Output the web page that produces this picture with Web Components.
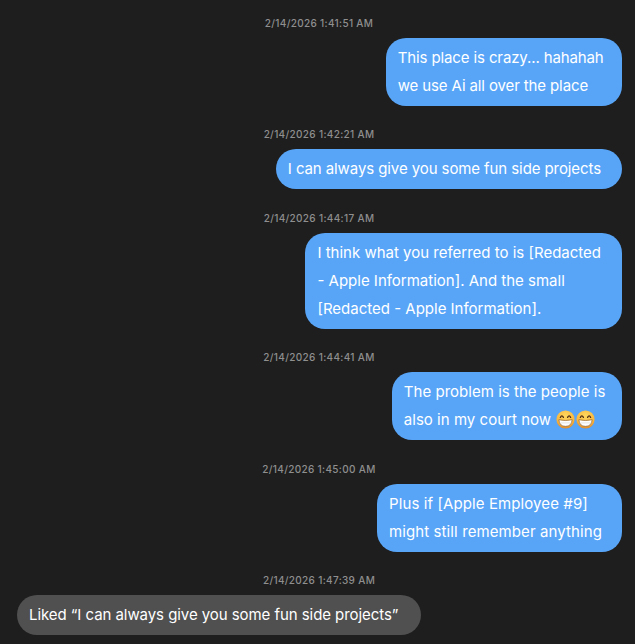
<!DOCTYPE html>
<html>
<head>
<meta charset="utf-8">
<title>Messages</title>
<style>
  html, body { margin: 0; background: #1e1e1e; }
  body { height: 644px; overflow: hidden; }
</style>
</head>
<body>
<chat-thread>
  <chat-stamp>2/14/2026 1:41:51 AM</chat-stamp>
  <chat-bubble style="--pad-end:18.4px;--track:-0.12px">This place is crazy... hahahah<br>we use Ai all over the place</chat-bubble>
  <chat-stamp>2/14/2026 1:42:21 AM</chat-stamp>
  <chat-bubble style="--pad-end:21px;--track:-0.09px">I can always give you some fun side projects</chat-bubble>
  <chat-stamp>2/14/2026 1:44:17 AM</chat-stamp>
  <chat-bubble style="--pad-end:21px">I think what you referred to is [Redacted<br>- Apple Information]. And the small<br>[Redacted - Apple Information].</chat-bubble>
  <chat-stamp>2/14/2026 1:44:41 AM</chat-stamp>
  <chat-bubble style="--pad-end:16.6px;--track:0.03px">The problem is the people is<br>also in my court now <grin-emoji></grin-emoji><grin-emoji></grin-emoji></chat-bubble>
  <chat-stamp>2/14/2026 1:45:00 AM</chat-stamp>
  <chat-bubble style="--pad-end:20px;--track:0.1px">Plus if [Apple Employee #9]<br>might still remember anything</chat-bubble>
  <chat-stamp>2/14/2026 1:47:39 AM</chat-stamp>
  <chat-bubble incoming style="--pad-end:23px;--track:-0.06px">Liked “I can always give you some fun side projects”</chat-bubble>
</chat-thread>

<script>
class ChatThread extends HTMLElement {
    constructor() {
        super()
        this.attachShadow({ mode: 'open' })
        this.shadowRoot.innerHTML = `
      <style>
        :host {
          display: flex;
          flex-direction: column;
          padding: 15px 13px 0 17px;
          font-family: Inter, "Liberation Sans", sans-serif;
        }
      </style>
      <slot></slot>
    `
    }
}

class ChatStamp extends HTMLElement {
    constructor() {
        super()
        this.attachShadow({ mode: 'open' })
        this.shadowRoot.innerHTML = `
      <style>
        :host {
          display: block;
          height: 22.6px;
          padding-right: 1px;
          line-height: 16px;
          text-align: center;
          font-size: 10px;
          font-weight: 500;
          letter-spacing: 0.33px;
          color: #8f8f8f;
          white-space: nowrap;
        }
      </style>
      <slot></slot>
    `
    }
}

class ChatBubble extends HTMLElement {
    constructor() {
        super()
        this.attachShadow({ mode: 'open' })
        this.shadowRoot.innerHTML = `
      <style>
        :host {
          display: block;
          align-self: flex-end;
          margin-bottom: 20.9px;
          padding: 6px var(--pad-end, 12px) 6px 12px;
          border-radius: 20px;
          background: #58a5f8;
          color: #fff;
          font-size: 15px;
          letter-spacing: var(--track, 0);
          line-height: 28px;
          white-space: nowrap;
        }
        :host([incoming]) {
          align-self: flex-start;
          background: #505050;
        }
      </style>
      <slot></slot>
    `
    }
}

class GrinEmoji extends HTMLElement {
    constructor() {
        super()
        this.attachShadow({ mode: 'open' })
        this.shadowRoot.innerHTML = `
      <style>
        :host {
          display: inline-block;
          width: 19px;
          height: 19px;
          margin-left: 1px;
          vertical-align: -4px;
        }
        svg { display: block; }
      </style>
      <svg width="19" height="19" viewBox="0 0 20 20">
        <defs>
          <radialGradient id="f" cx="50%" cy="30%" r="72%">
            <stop offset="0" stop-color="#ffd85e"/>
            <stop offset="0.7" stop-color="#f8b63f"/>
            <stop offset="1" stop-color="#d9822b"/>
          </radialGradient>
        </defs>
        <circle cx="10" cy="10" r="9.6" fill="url(#f)"/>
        <path d="M4.6 7.8 Q6.1 4.6 7.8 7.8" fill="none" stroke="#4e2f17" stroke-width="1.4" stroke-linecap="round"/>
        <path d="M12.2 7.8 Q13.9 4.6 15.4 7.8" fill="none" stroke="#4e2f17" stroke-width="1.4" stroke-linecap="round"/>
        <path d="M3 10.2 Q10 12 17 10.2 Q16.4 17.2 10 17.2 Q3.6 17.2 3 10.2 Z" fill="#fff" stroke="#8a5a2a" stroke-width="0.7"/>
        <path d="M3.6 13.6 H16.4" stroke="#cfc8bc" stroke-width="0.5" fill="none"/>
      </svg>
    `
    }
}

customElements.define('chat-thread', ChatThread)
customElements.define('chat-stamp', ChatStamp)
customElements.define('chat-bubble', ChatBubble)
customElements.define('grin-emoji', GrinEmoji)
</script>
</body>
</html>
